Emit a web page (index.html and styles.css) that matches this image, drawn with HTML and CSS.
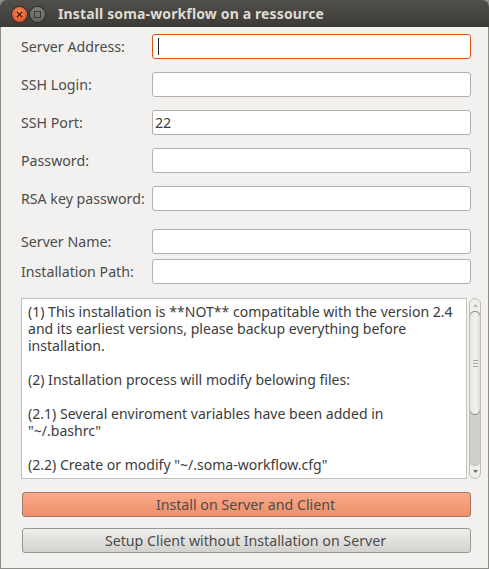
FILE: index.html
```html
<!DOCTYPE html>
<html lang="en">
<head>
<meta charset="utf-8">
<title>Install soma-workflow on a ressource</title>
<link rel="stylesheet" href="styles.css">
</head>
<body>
<div class="window">
  <header class="titlebar">
    <span class="wbtn close">
      <svg viewBox="0 0 8 8" width="7" height="7"><path d="M1 1L7 7M7 1L1 7" stroke="#3c1408" stroke-width="1.4" fill="none"/></svg>
    </span>
    <span class="wbtn max"><span class="maxbox"></span></span>
    <span class="title">Install soma-workflow on a ressource</span>
  </header>
  <main class="content">
    <div class="rows first">
      <label class="row"><span class="lbl">Server Address:</span><span class="input focus"><span class="caret"></span></span></label>
      <label class="row"><span class="lbl">SSH Login:</span><span class="input"></span></label>
      <label class="row"><span class="lbl">SSH Port:</span><span class="input">22</span></label>
      <label class="row"><span class="lbl">Password:</span><span class="input"></span></label>
      <label class="row"><span class="lbl">RSA key password:</span><span class="input"></span></label>
    </div>
    <div class="rows second">
      <label class="row"><span class="lbl">Server Name:</span><span class="input"></span></label>
      <label class="row"><span class="lbl">Installation Path:</span><span class="input"></span></label>
    </div>
    <div class="textwrap">
      <div class="textview">
        <p>(1) This installation is **NOT** compatitable with the version 2.4<br>and its earliest versions, please backup everything before<br>installation.</p>
        <p>(2) Installation process will modify belowing files:</p>
        <p>(2.1) Several enviroment variables have been added in<br>"~/.bashrc"</p>
        <p>(2.2) Create or modify "~/.soma-workflow.cfg"</p>
      </div>
      <div class="scrollbar">
        <svg class="arrow" viewBox="0 0 5 3" width="5" height="3"><path d="M2.5 0L5 3H0Z" fill="#b5b3b0"/></svg>
        <div class="track">
          <div class="thumb"><span class="grip"></span><span class="grip"></span><span class="grip"></span></div>
        </div>
        <svg class="arrow" viewBox="0 0 5 3" width="5" height="3"><path d="M0 0H5L2.5 3Z" fill="#6e6c68"/></svg>
      </div>
    </div>
    <button class="btn primary">Install on Server and Client</button>
    <button class="btn secondary">Setup Client without Installation on Server</button>
  </main>
</div>
</body>
</html>
```
FILE: styles.css
```css
* { box-sizing: border-box; }
html, body { margin: 0; padding: 0; background: #8e8c88; }
body { width: 489px; height: 569px; overflow: hidden; font-family: "Noto Sans", "DejaVu Sans", sans-serif; font-size: 14.2px; color: #4c4c4c; }
.window { width: 489px; height: 569px; display: flex; flex-direction: column; border-radius: 7px 7px 0 0; overflow: hidden; }
.titlebar { height: 27px; flex: none; display: flex; align-items: center; padding-left: 12px; background: linear-gradient(#504f4a, #3c3b37); }
.wbtn { width: 15px; height: 15px; margin-top: 2px; border-radius: 50%; display: flex; align-items: center; justify-content: center; flex: none; }
.close { background: radial-gradient(circle at 50% 35%, #f3855a, #d8481c); box-shadow: 0 0 0 1px #2e2d2a; }
.max { margin-left: 3px; background: linear-gradient(#807e78, #66645f); box-shadow: 0 0 0 1px #2e2d2a; }
.maxbox { width: 7px; height: 7px; border: 1.5px solid #3d3c38; }
.title { margin-left: 13px; font-size: 14px; font-weight: 700; color: #dfdbd2; letter-spacing: 0.14px; white-space: nowrap; }
.content { flex: 1; background: #f2f1f0; border: solid #8e8c88; border-width: 0 1px 1px; padding: 7px 17px 0 20px; display: flex; flex-direction: column; }
.rows { display: flex; flex-direction: column; }
.first { gap: 13px; }
.second { gap: 5px; margin-top: 18px; }
.row { display: flex; align-items: center; height: 25px; }
.lbl { width: 131px; flex: none; white-space: nowrap; }
.input { flex: 1; height: 25px; background: #fff; border: 1px solid #b3b0ab; border-radius: 3px; padding: 0 2px; display: flex; align-items: center; color: #3c3c3c; }
.input.focus { border-color: #e2541c; }
.caret { width: 1px; height: 17px; margin-left: 3px; background: #222; }
.textwrap { display: flex; margin-top: 14px; height: 181px; margin-right: -10px; }
.textview { width: 446px; flex: none; background: #fff; border: 1px solid #c4c1bc; padding: 4px 6px; line-height: 17px; font-size: 14.05px; color: #3c3c3c; overflow: hidden; white-space: nowrap; }
.textview p { margin: 0 0 17px; }
.scrollbar { width: 13px; margin-left: 2px; border: 1px solid #c0bdb8; border-radius: 7px; background: #f0efee; display: flex; flex-direction: column; align-items: center; overflow: hidden; }
.arrow { flex: none; margin: 5px 0; }
.track { flex: 1; width: 100%; background: #d0cfcc; border-radius: 6px; box-shadow: 0 0 0 1px #c4c1bc; }
.thumb { height: 104px; background: linear-gradient(90deg, #e6e5e3, #f3f2f1 60%, #dedcd9); border: 1px solid #8f8d89; border-radius: 6px; margin: -1px -1px 0; display: flex; flex-direction: column; align-items: center; justify-content: center; gap: 2px; }
.grip { width: 5px; height: 1px; background: #a8a6a2; }
.btn { flex: none; height: 25px; margin-left: 1px; width: 449px; border-radius: 3px; font: inherit; color: #4c4c4c; padding: 0 2px 0 0; cursor: pointer; }
.primary { margin-top: 13px; background: linear-gradient(#fbaa8b, #ef8f6a); border: 1px solid #a07864; }
.secondary { margin-top: 11px; background: linear-gradient(#f0efed, #d2d1ce); border: 1px solid #9a9894; }
```
